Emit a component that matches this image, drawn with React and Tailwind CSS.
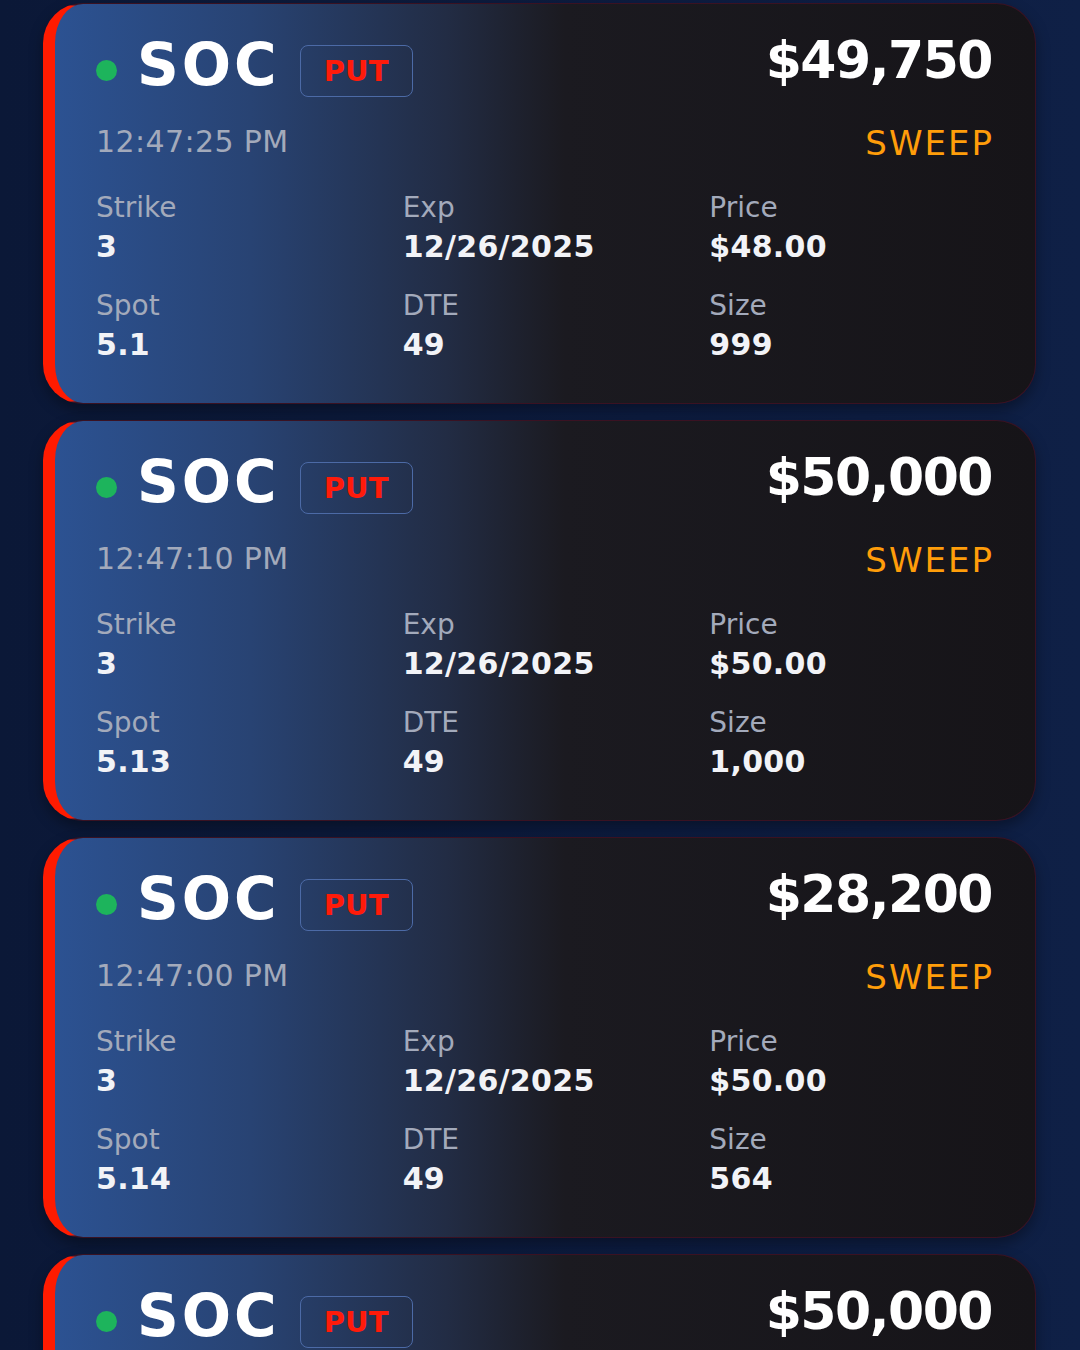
const TRADES = [
  { time: "12:47:25 PM", premium: "$49,750", price: "$48.00", spot: "5.1", size: "999" },
  { time: "12:47:10 PM", premium: "$50,000", price: "$50.00", spot: "5.13", size: "1,000" },
  { time: "12:47:00 PM", premium: "$28,200", price: "$50.00", spot: "5.14", size: "564" },
  { time: "12:46:48 PM", premium: "$50,000", price: "$50.00", spot: "5.14", size: "1,000" },
];

function Stat({ label, value }) {
  return (
    <div>
      <div className="text-[28px] leading-none text-[#a3aabb]">{label}</div>
      <div className="mt-[10px] text-[30px] leading-none font-bold tracking-[0.3px] text-[#f2f3f7]">{value}</div>
    </div>
  );
}

function TradeCard({ trade }) {
  return (
    <div className="shrink-0 rounded-[40px] border border-[#3a1222] border-l-[12px] border-l-[#ff1b00] bg-[linear-gradient(90deg,#2c5292_0%,#284373_20%,#222c44_40%,#1b1a20_52%,#161418_100%)] pt-[32px] pb-[43px] pl-[41px] pr-[43px] shadow-[0_6px_14px_rgba(0,0,0,0.35)]">
      <div className="flex h-[58px] items-start justify-between">
        <div className="flex items-start">
          <span className="mt-[24px] h-[21px] w-[21px] rounded-full bg-[#1db45c]" />
          <span className="ml-[20px] text-[58px] leading-none font-bold tracking-[3px] text-white">SOC</span>
          <span className="ml-[20px] mt-[9px] flex h-[52px] w-[113px] items-center justify-center rounded-[8px] border-[1.5px] border-[#4c6aa6] text-[29px] leading-none font-bold text-[#ff1b0a]">
            PUT
          </span>
        </div>
        <span className="-mt-[2px] text-[52px] leading-none font-bold tracking-[-1.5px] text-white">
          {trade.premium}
        </span>
      </div>
      <div className="mt-[32px] flex h-[34px] items-start justify-between">
        <span className="mt-[1px] text-[30px] leading-none tracking-[0.4px] text-[#a3aabb]">{trade.time}</span>
        <span className="-mr-[2px] text-[34px] leading-none tracking-[2px] text-[#ff9d0a]">SWEEP</span>
      </div>
      <div className="mt-[34px] grid grid-cols-3 gap-x-6 gap-y-[30px]">
        <Stat label="Strike" value="3" />
        <Stat label="Exp" value="12/26/2025" />
        <Stat label="Price" value={trade.price} />
        <Stat label="Spot" value={trade.spot} />
        <Stat label="DTE" value="49" />
        <Stat label="Size" value={trade.size} />
      </div>
    </div>
  );
}

export default function App() {
  return (
    <div
      className="h-[1350px] overflow-hidden bg-[linear-gradient(90deg,#0b1837_0%,#0d1c40_60%,#0f2046_100%)] pt-[3px] pl-[43px] pr-[44px]"
      style={{ fontFamily: '"DejaVu Sans", sans-serif' }}
    >
      <div className="flex flex-col gap-4">
        {TRADES.map((t, i) => (
          <TradeCard key={i} trade={t} />
        ))}
      </div>
    </div>
  );
}
